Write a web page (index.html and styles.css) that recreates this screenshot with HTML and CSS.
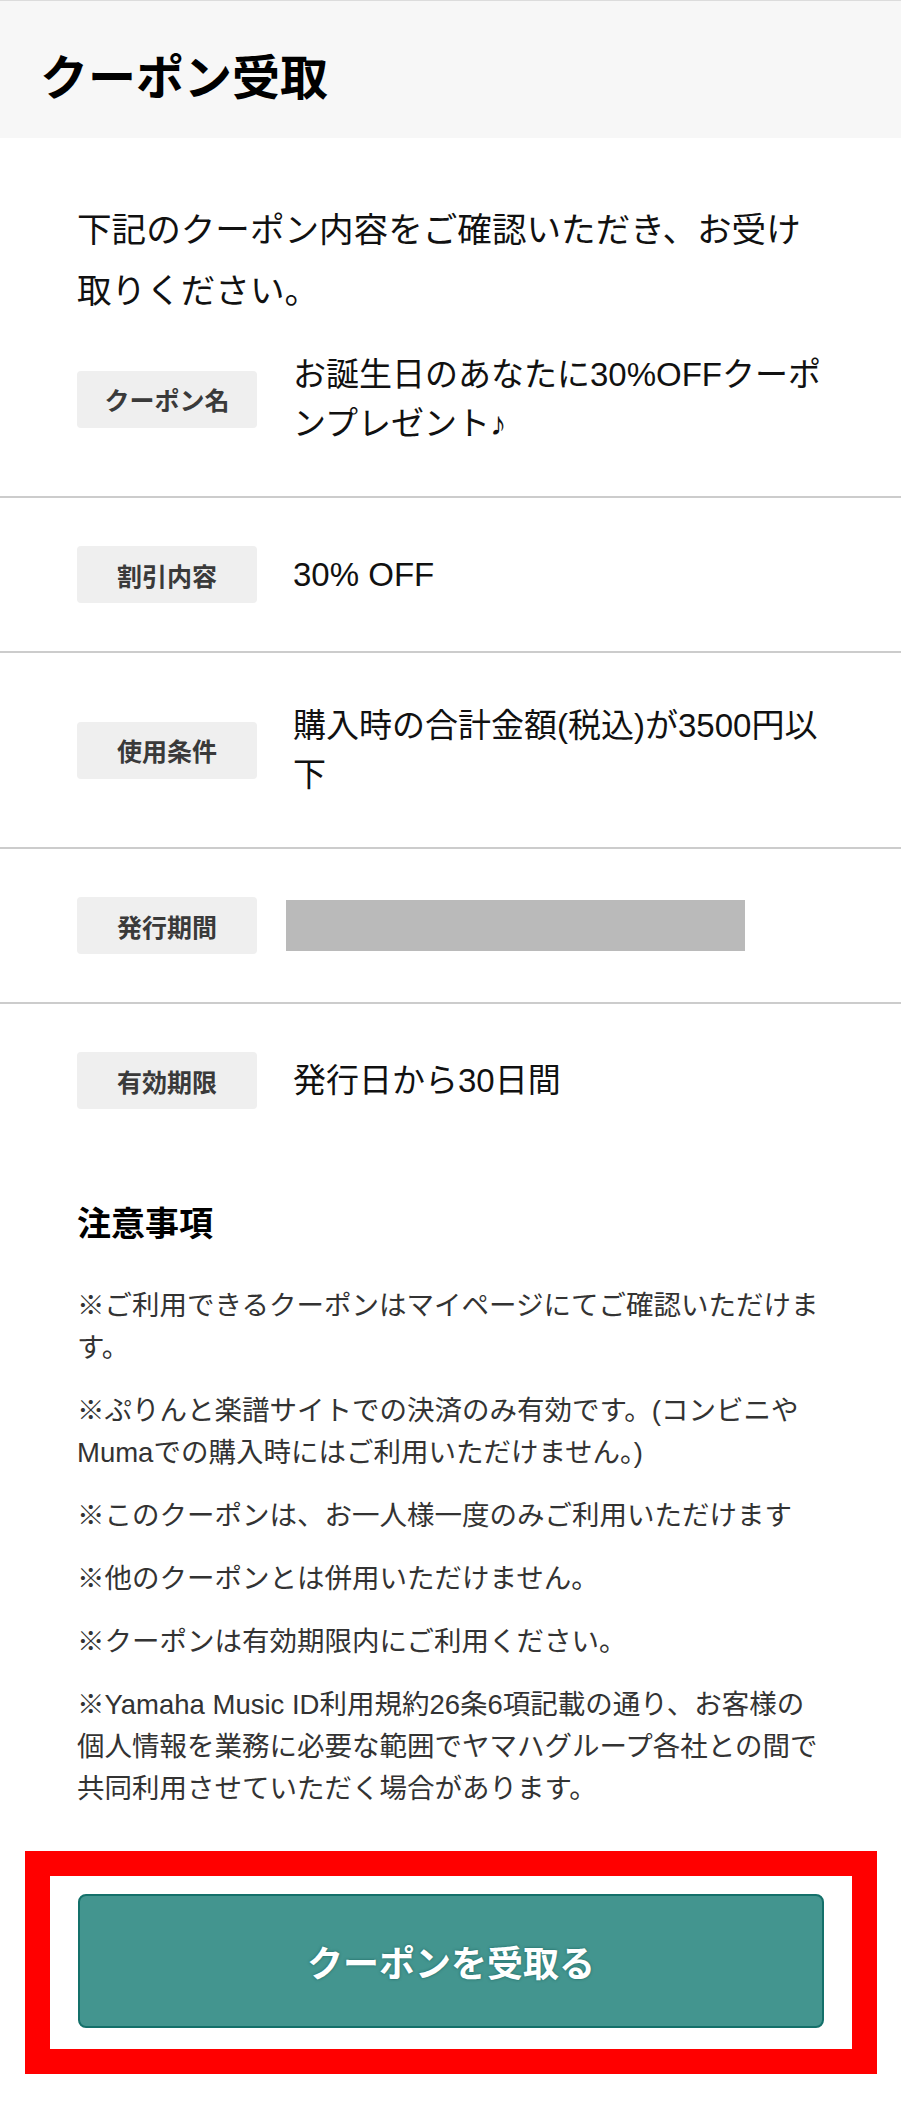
FILE: index.html
```html
<!DOCTYPE html>
<html lang="ja">
<head>
<meta charset="utf-8">
<title>クーポン受取</title>
<link rel="stylesheet" href="styles.css">
</head>
<body>
<header class="page-header">
  <h1 class="page-title">クーポン受取</h1>
</header>
<main class="content">
  <p class="intro">下記のクーポン内容をご確認いただき、お受け取りください。</p>
  <dl class="coupon-table">
    <div class="row">
      <dt class="label">クーポン名</dt>
      <dd class="value">お誕生日のあなたに30%OFFクーポンプレゼント♪</dd>
    </div>
    <div class="row">
      <dt class="label">割引内容</dt>
      <dd class="value">30% OFF</dd>
    </div>
    <div class="row">
      <dt class="label">使用条件</dt>
      <dd class="value">購入時の合計金額(税込)が3500円以下</dd>
    </div>
    <div class="row">
      <dt class="label">発行期間</dt>
      <dd class="value"><span class="redacted"></span></dd>
    </div>
    <div class="row">
      <dt class="label">有効期限</dt>
      <dd class="value">発行日から30日間</dd>
    </div>
  </dl>
  <section class="notes">
    <h2 class="notes-title">注意事項</h2>
    <p class="note">※ご利用できるクーポンはマイページにてご確認いただけます。</p>
    <p class="note">※ぷりんと楽譜サイトでの決済のみ有効です。(コンビニやMumaでの購入時にはご利用いただけません。)</p>
    <p class="note">※このクーポンは、お一人様一度のみご利用いただけます</p>
    <p class="note">※他のクーポンとは併用いただけません。</p>
    <p class="note">※クーポンは有効期限内にご利用ください。</p>
    <p class="note">※Yamaha Music ID利用規約26条6項記載の通り、お客様の個人情報を業務に必要な範囲でヤマハグループ各社との間で共同利用させていただく場合があります。</p>
  </section>
  <div class="cta">
    <button class="cta-button" type="button">クーポンを受取る</button>
  </div>
</main>
</body>
</html>
```

FILE: styles.css
```css
* {
  box-sizing: border-box;
}

html, body {
  margin: 0;
  padding: 0;
  background: #ffffff;
}

body {
  width: 901px;
  font-family: "Liberation Sans", "Noto Sans CJK JP", sans-serif;
  color: #111111;
}

.page-header {
  border-top: 1px solid #dcdcdc;
  background: #f7f7f7;
  padding: 54px 40px 35px;
}

.page-title {
  margin: 0;
  font-size: 48px;
  line-height: 48px;
  font-weight: 700;
  color: #000000;
}

.content {
  padding-top: 62px;
}

.intro {
  margin: 0;
  padding: 0 77px;
  font-size: 34.6px;
  line-height: 61px;
  color: #111111;
}

.coupon-table {
  margin: 0;
}

.row {
  display: flex;
  align-items: center;
  gap: 36px;
  padding: 48px 77px;
  border-bottom: 2px solid #cccccc;
}

.row:first-child {
  padding-top: 28px;
}

.row:last-child {
  border-bottom: none;
}

.label {
  flex: 0 0 180px;
  height: 57px;
  display: flex;
  align-items: center;
  justify-content: center;
  background: #efefef;
  border-radius: 4px;
  font-size: 25px;
  font-weight: 700;
  color: #3a3a3a;
}

.value {
  flex: 1;
  margin: 0;
  font-size: 33px;
  line-height: 49px;
  color: #111111;
}

.redacted {
  display: block;
  width: 459px;
  height: 51px;
  margin-left: -7px;
  background: #bababa;
}

.notes {
  padding: 0 77px;
  margin-top: 42px;
}

.notes-title {
  margin: 0 0 36px;
  font-size: 34px;
  line-height: 50px;
  font-weight: 700;
  color: #000000;
}

.note {
  margin: 0 0 21px;
  font-size: 27.5px;
  line-height: 42px;
  color: #333333;
}

.note:last-child {
  margin-bottom: 0;
}

.cta {
  margin: 41px 24px 0 25px;
  border: 25px solid #ff0000;
  padding: 18px 28px 21px;
}

.cta-button {
  display: block;
  width: 100%;
  height: 134px;
  border: 2px solid #14706a;
  border-radius: 8px;
  background: #43958f;
  color: #ffffff;
  font-family: "Liberation Sans", "Noto Sans CJK JP", sans-serif;
  font-size: 36px;
  font-weight: 700;
  text-shadow: 0 0 3px rgba(0, 70, 65, 0.6);
  cursor: pointer;
}
```
